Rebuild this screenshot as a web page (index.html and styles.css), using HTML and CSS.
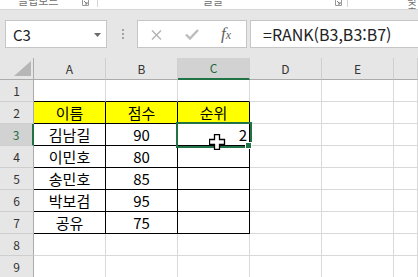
FILE: index.html
```html
<!DOCTYPE html>
<html lang="ko">
<head>
    <meta charset="UTF-8">
    <meta name="viewport" content="width=device-width, initial-scale=1.0">
    <title>RANK 함수</title>
    <link rel="stylesheet" href="styles.css">
</head>
<body>
    <!-- 리본 아래쪽 -->
    <div class="ribbon">
        <div class="rgroup g1">
            <span class="rlabel">클립보드</span>
            <svg class="launch" width="7" height="7" viewBox="0 0 7 7"><path d="M0.5 0.5h6v6h-6z" fill="none" stroke="#9a9a9a"/><path d="M2 2l3 3M5 3v2h-2" fill="none" stroke="#7a7a7a"/></svg>
        </div>
        <div class="rgroup g2">
            <span class="rlabel">글꼴</span>
            <svg class="launch" width="7" height="7" viewBox="0 0 7 7"><path d="M0.5 0.5h6v6h-6z" fill="none" stroke="#9a9a9a"/><path d="M2 2l3 3M5 3v2h-2" fill="none" stroke="#7a7a7a"/></svg>
        </div>
        <div class="rgroup g3">
            <span class="rlabel">맞춤</span>
        </div>
    </div>

    <!-- 이름 상자 / 수식 입력줄 -->
    <div class="fbar">
        <div class="namebox">
            <span>C3</span>
            <svg class="drop" width="7" height="4" viewBox="0 0 7 4"><path d="M0 0h7l-3.5 4z" fill="#6b6b6b"/></svg>
        </div>
        <div class="grip">
            <svg width="2" height="10" viewBox="0 0 2 10"><rect y="0" width="2" height="2" fill="#a3a3a3"/><rect y="4" width="2" height="2" fill="#a3a3a3"/><rect y="8" width="2" height="2" fill="#a3a3a3"/></svg>
        </div>
        <div class="fbtns">
            <svg class="ic-x" width="11" height="10" viewBox="0 0 11 10"><path d="M1 0.5l9 9M10 0.5l-9 9" stroke="#b3b3b3" stroke-width="1.4"/></svg>
            <svg class="ic-ok" width="14" height="11" viewBox="0 0 14 11"><path d="M1 5.5l4 4 8-8.5" fill="none" stroke="#bcbcbc" stroke-width="2.4"/></svg>
            <i class="fx">f<small>x</small></i>
        </div>
        <div class="formula">=RANK(B3,B3:B7)</div>
    </div>

    <!-- 시트 -->
    <div class="sheet">
        <div class="cell corner"><svg width="17" height="15" viewBox="0 0 17 15"><path d="M17 0v15h-17z" fill="#b6b6b6"/></svg></div>
        <div class="cell colhdr">A</div>
        <div class="cell colhdr">B</div>
        <div class="cell colhdr sel-c">C</div>
        <div class="cell colhdr">D</div>
        <div class="cell colhdr">E</div>
        <div class="cell colhdr"></div>

        <div class="cell rowhdr">1</div>
        <div class="cell bt"></div><div class="cell bt"></div><div class="cell bt"></div>
        <div class="cell"></div><div class="cell"></div><div class="cell"></div>

        <div class="cell rowhdr">2</div>
        <div class="cell bx yel">이름</div><div class="cell bx yel">점수</div><div class="cell bx yel">순위</div>
        <div class="cell"></div><div class="cell"></div><div class="cell"></div>

        <div class="cell rowhdr sel-r">3</div>
        <div class="cell bx">김남길</div><div class="cell bx">90</div>
        <div class="cell bx num active">2
            <svg class="cursor" width="17" height="16" viewBox="0 0 17 16"><path d="M5.5 0.5h5v5h5v5h-5v5h-5v-5h-5v-5h5z" fill="#fff" stroke="#000" stroke-width="1.3"/></svg>
        </div>
        <div class="cell"></div><div class="cell"></div><div class="cell"></div>

        <div class="cell rowhdr">4</div>
        <div class="cell bx">이민호</div><div class="cell bx">80</div><div class="cell bx"></div>
        <div class="cell"></div><div class="cell"></div><div class="cell"></div>

        <div class="cell rowhdr">5</div>
        <div class="cell bx">송민호</div><div class="cell bx">85</div><div class="cell bx"></div>
        <div class="cell"></div><div class="cell"></div><div class="cell"></div>

        <div class="cell rowhdr">6</div>
        <div class="cell bx">박보검</div><div class="cell bx">95</div><div class="cell bx"></div>
        <div class="cell"></div><div class="cell"></div><div class="cell"></div>

        <div class="cell rowhdr">7</div>
        <div class="cell bx">공유</div><div class="cell bx">75</div><div class="cell bx"></div>
        <div class="cell"></div><div class="cell"></div><div class="cell"></div>

        <div class="cell rowhdr">8</div>
        <div class="cell"></div><div class="cell"></div><div class="cell"></div>
        <div class="cell"></div><div class="cell"></div><div class="cell"></div>

        <div class="cell rowhdr">9</div>
        <div class="cell"></div><div class="cell"></div><div class="cell"></div>
        <div class="cell"></div><div class="cell"></div><div class="cell"></div>
    </div>
</body>
</html>
```

FILE: styles.css
```css
/* 전체 */
body {
    margin: 0;
    width: 418px;
    height: 277px;
    overflow: hidden;
    background-color: #e6e6e6;
    font-family: "Noto Sans CJK KR", "Noto Sans", sans-serif;
    color: #000;
}

/* 리본 아래쪽 (잘려서 보이는 부분) */
.ribbon {
    display: flex;
    height: 9px;
    background-color: #fff;
    border-bottom: 1px solid #d6d6d6;
    overflow: hidden;
}

.rgroup {
    display: flex;
    align-items: flex-start;
    height: 7px;
    box-sizing: border-box;
    border-right: 1px solid #d4d4d4;
}

.rlabel {
    font-size: 11px;
    line-height: 12px;
    margin-top: -6px;
    color: #6f6f6f;
}

.launch {
    margin-top: -1px;
}

.g1 {
    width: 98px;
    padding-left: 18px;
}
.g1 .launch {
    margin-left: 24px;
}

.g2 {
    width: 250px;
    padding-left: 105px;
}
.g2 .launch {
    margin-left: 112px;
}

.g3 {
    flex: 1;
    padding-left: 59px;
    border-right: none;
}

/* 수식 입력줄 */
.fbar {
    display: flex;
    height: 28px;
    margin: 10px 0 10px 5px;
}

.namebox {
    display: flex;
    align-items: center;
    justify-content: space-between;
    width: 102px;
    box-sizing: border-box;
    padding: 0 5px 0 7px;
    background-color: #fff;
    border: 1px solid #c6c6c6;
    font-size: 15px;
    color: #222;
}

.drop {
    margin-top: 1px;
}

.grip {
    display: flex;
    align-items: center;
    justify-content: center;
    width: 30px;
    padding-left: 1px;
    box-sizing: border-box;
}

.fbtns {
    display: flex;
    align-items: center;
    width: 110px;
    box-sizing: border-box;
    padding-left: 13px;
    background-color: #fff;
    border: 1px solid #c6c6c6;
}

.ic-x {
    margin-top: 1px;
}

.ic-ok {
    margin-left: 23px;
}

.fx {
    margin-left: 22px;
    font-family: "Liberation Serif", serif;
    font-size: 17px;
    color: #5f5f5f;
}
.fx small {
    font-size: 12px;
}

.formula {
    display: flex;
    align-items: center;
    flex: 1;
    margin-left: 3px;
    padding-left: 12px;
    background-color: #fff;
    border: 1px solid #c6c6c6;
    border-right: none;
    font-size: 16px;
    color: #222;
}

/* 시트 */
.sheet {
    display: grid;
    grid-template-columns: 34px repeat(5, 72px) 1fr;
    grid-auto-rows: 22px;
    background-color: #fff;
}

.cell {
    display: flex;
    align-items: center;
    justify-content: center;
    box-sizing: border-box;
    border-right: 1px solid #d9d9d9;
    border-bottom: 1px solid #d9d9d9;
    font-size: 15px;
    line-height: 1;
}

.corner {
    align-items: flex-end;
    justify-content: flex-end;
    padding: 0 2px 3px 0;
    background-color: #e6e6e6;
    border-right-color: #ababab;
    border-bottom-color: #ababab;
}

.colhdr {
    background-color: #e6e6e6;
    border-right-color: #cfcfcf;
    border-bottom-color: #ababab;
    font-size: 12px;
    color: #333;
}

.rowhdr {
    background-color: #e6e6e6;
    border-right-color: #ababab;
    border-bottom-color: #cfcfcf;
    font-size: 12px;
    color: #333;
}

.sel-c {
    background-color: #d2d2d2;
    border-bottom: 2px solid #217346;
    color: #1d6b3f;
}

.sel-r {
    background-color: #d2d2d2;
    border-right: 2px solid #217346;
    color: #1d6b3f;
}

/* 표 테두리 */
.bt {
    border-bottom-color: #000;
}

.bx {
    border-right-color: #000;
    border-bottom-color: #000;
}

.yel {
    background-color: #ffff00;
}

.num {
    justify-content: flex-end;
    padding-right: 2px;
}

/* 선택된 셀 */
.active {
    position: relative;
    z-index: 1;
    outline: 2px solid #217346;
}

.active::after {
    content: '';
    position: absolute;
    right: -3px;
    bottom: -4px;
    width: 5px;
    height: 5px;
    background-color: #217346;
    border: 1px solid #fff;
}

.cursor {
    position: absolute;
    left: 31px;
    top: 10px;
}
```
